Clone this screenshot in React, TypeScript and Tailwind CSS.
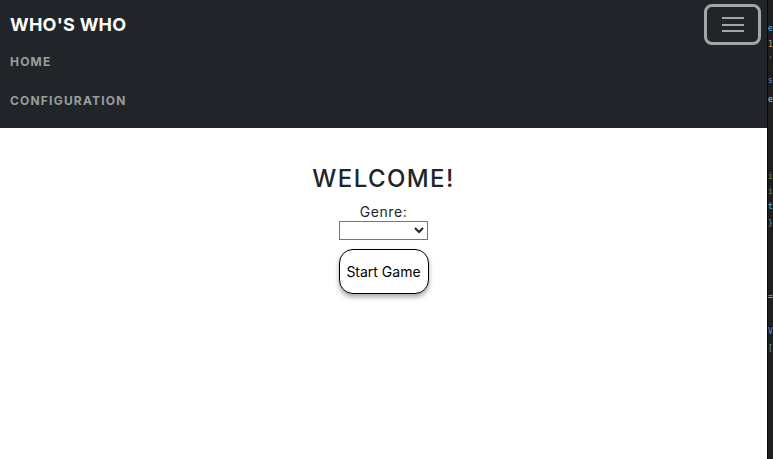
import React from "react";

export default function App() {
  return (
    <div className="flex w-[773px] h-[459px] overflow-hidden bg-white" style={{ fontFamily: "Inter, 'Noto Sans', sans-serif" }}>
      <div className="flex flex-col w-[767px] shrink-0">
        <nav className="bg-[#212529] h-[128px] flex flex-col px-[10px] relative">
          <div className="text-white font-bold text-[18px] leading-[22px] tracking-[0.25px] mt-[14px]">WHO'S WHO</div>
          <div className="text-[#9b9d9f] font-bold text-[12px] tracking-[1.2px] mt-[18px] leading-[16px]">HOME</div>
          <div className="text-[#9b9d9f] font-bold text-[12px] tracking-[1.2px] mt-[23px] leading-[16px]">CONFIGURATION</div>
          <button className="absolute left-[704px] top-[4px] w-[57px] h-[41px] border-[3px] border-[#a4a5a7] rounded-[8px] flex flex-col items-center justify-center gap-[4.5px]">
            <span className="block w-[22px] h-[2px] bg-[#a4a5a7]" />
            <span className="block w-[22px] h-[2px] bg-[#a4a5a7]" />
            <span className="block w-[22px] h-[2px] bg-[#a4a5a7]" />
          </button>
        </nav>
        <main className="flex flex-col items-center text-[#212529]">
          <h1 className="text-[24px] leading-[30px] tracking-[1.4px] font-medium mt-[36px]">WELCOME!</h1>
          <label className="text-[14px] leading-[16px] tracking-[0.6px] mt-[10px]">Genre:</label>
          <select className="w-[89px] h-[19px] border border-[#767676] bg-white text-[12px] mt-[1px] rounded-none" />
          <button className="mt-[9px] w-[90px] h-[45px] rounded-[14px] border border-black bg-white text-[14px] text-black shadow-[0_3px_5px_rgba(0,0,0,0.35)]">Start Game</button>
        </main>
      </div>
      <div className="w-[1px] bg-[#0a0a0a] shrink-0" />
      <div className="flex-1 bg-[#1e1e1e] relative overflow-hidden text-[8px] leading-[10px]" style={{ fontFamily: "'DejaVu Sans Mono', monospace" }}>
        <div className="absolute left-0 top-[24px] text-[#4fc1ff]">e</div>
        <div className="absolute left-0 top-[40px] text-[#ce9178]">1</div>
        <div className="absolute left-0 top-[56px] text-[#6a9955]">'</div>
        <div className="absolute left-0 top-[76px] text-[#569cd6]">s</div>
        <div className="absolute left-0 top-[95px] text-[#cccccc]">e</div>
        <div className="absolute left-0 top-[172px] text-[#6a9955]">i</div>
        <div className="absolute left-0 top-[187px] text-[#6a9955]">i</div>
        <div className="absolute left-0 top-[202px] text-[#4fc1ff]">t</div>
        <div className="absolute left-0 top-[219px] text-[#569cd6]">{"}"}</div>
        <div className="absolute left-0 top-[292px] text-[#cccccc]">=</div>
        <div className="absolute left-0 top-[327px] text-[#569cd6]">V</div>
        <div className="absolute left-0 top-[344px] text-[#569cd6]">[</div>
      </div>
    </div>
  );
}
